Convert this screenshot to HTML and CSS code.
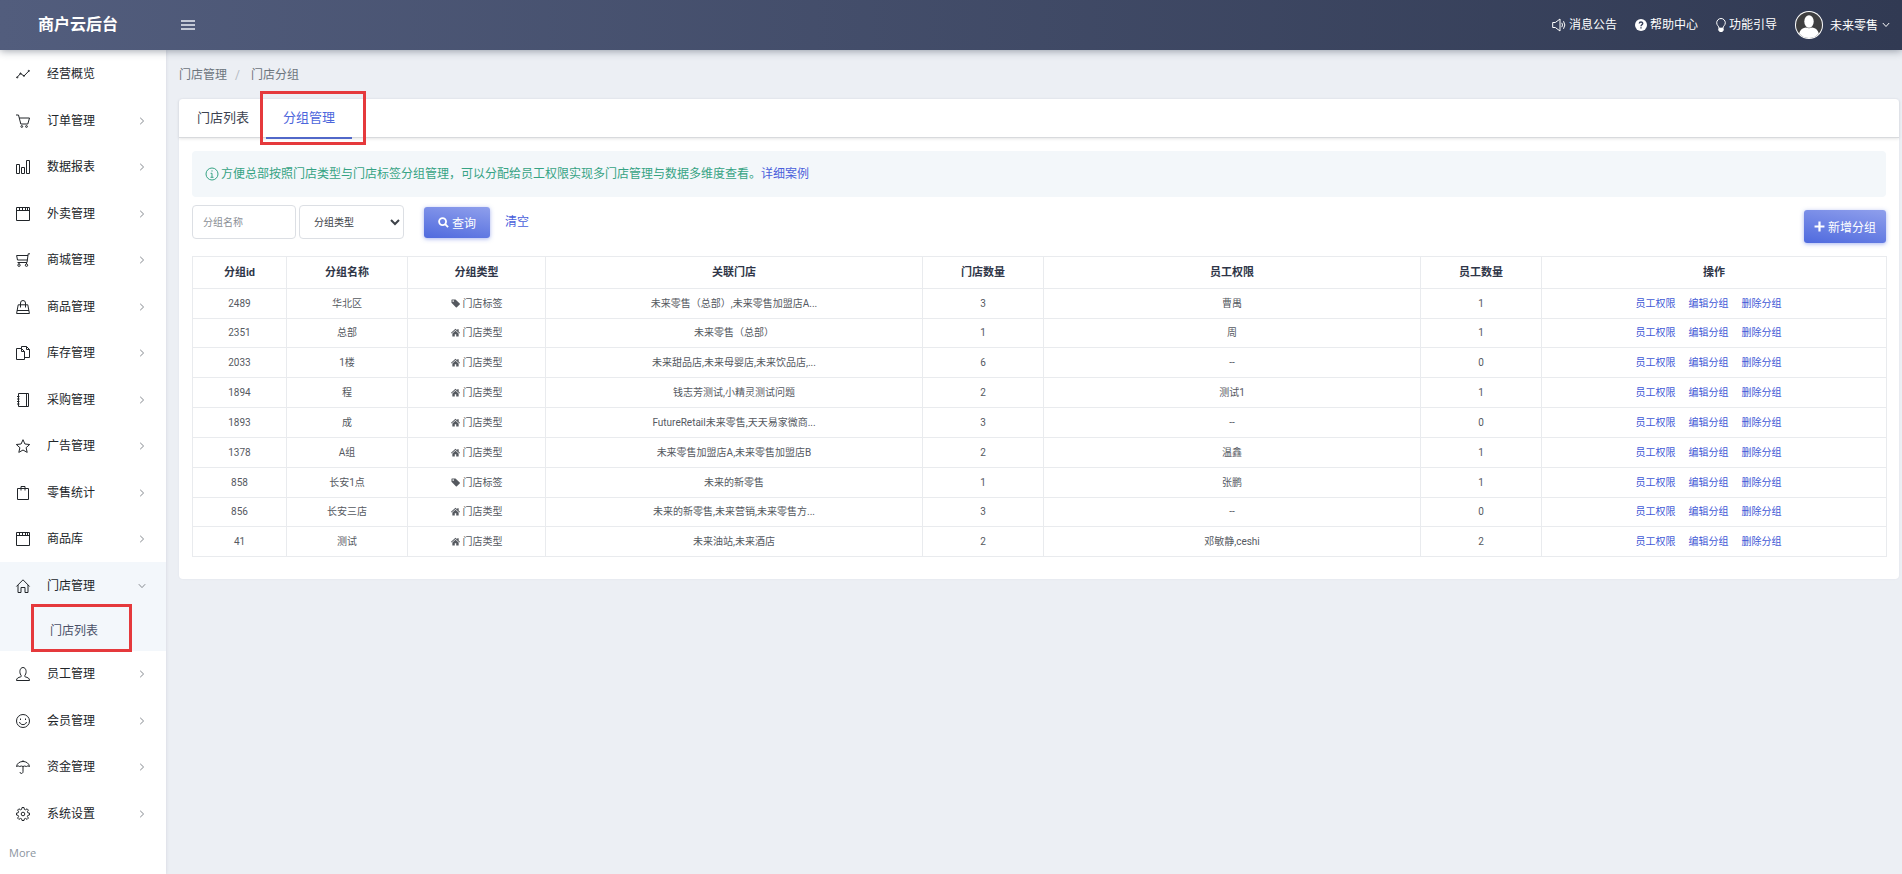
FILE: index.html
```html
<!DOCTYPE html>
<html lang="zh-CN">
<head>
<meta charset="utf-8">
<title>商户云后台</title>
<link rel="stylesheet" href="styles.css">
</head>
<body>
<svg class="sprite" aria-hidden="true">
  <symbol id="chev" viewBox="0 0 6 8"><path d="M1.2 .8 4.6 4 1.2 7.2"/></symbol>
  <symbol id="tag" viewBox="0 0 10 10"><path fill-rule="evenodd" d="M.5 1v3.200l4.900 5a.8.8 0 0 0 1.100 0L9.700 6a.8.8 0 0 0 0-1.100L5 .5H1A.5.5 0 0 0 .5 1zm2.800 1.300a.9.9 0 1 1-1.800 0 .9.9 0 0 1 1.800 0z"/></symbol>
  <symbol id="house" viewBox="0 0 10 10"><path d="M5 .8 0 5.300l.6.8L5 2.200l4.400 3.900.6-.8-1.500-1.300V1.300H6.900v1.200zM5 3.100 1.500 6.100v3.400h2.700V6.900h1.600v2.600h2.700V6.100z"/></symbol>
</svg>

<header class="topbar">
  <a class="brand" href="#">商户云后台</a>
  <button class="burger" type="button" aria-label="菜单"><svg viewBox="0 0 14 10"><path d="M0 1h14M0 5h14M0 9h14"/></svg></button>
  <nav class="top-links">
    <a href="#"><svg class="ic" viewBox="0 0 14 14"><path d="M.7 4.500h2.600L8 1v12L3.300 9.500H.7zM9.800 4.800q1.400 2.200 0 4.400M11.500 3.200q2.700 3.800 0 7.600"/></svg>消息公告</a>
    <a href="#"><svg class="ic12" viewBox="0 0 12 12"><circle cx="6" cy="6" r="6" fill="#fff"/><path d="M4.300 4.600C4.300 2.500 7.700 2.500 7.700 4.500 7.700 5.800 6 5.800 6 7.200M6 8.300v1.300" fill="none" stroke="#37415b" stroke-width="1.400"/></svg>帮助中心</a>
    <a href="#"><svg class="ic bulb" viewBox="0 0 10 14"><path d="M3 10.200C3 8 .7 7.500.7 4.800a4.300 4.300 0 0 1 8.600 0C9.300 7.500 7 8 7 10.200z"/><path d="M2.800 10.500h4.400v2L6 13.500H4l-1.200-1z" fill="#fff"/></svg>功能引导</a>
  </nav>
  <button class="account" type="button">
    <svg class="avatar" viewBox="0 0 28 28"><circle cx="14" cy="14" r="14" fill="#fff"/><circle cx="14" cy="14" r="13" fill="#3f3f40"/><path d="M4.200 22.600c.8-4.300 4-6 6.800-6.200q3 1.600 6 0c2.800.2 6 1.900 6.800 6.200A13 13 0 0 1 4.200 22.600z" fill="#fff"/><ellipse cx="14" cy="10.500" rx="4.700" ry="6.300" fill="#fff"/></svg>
    <span>未来零售</span>
    <svg class="down" viewBox="0 0 8 6"><path d="M.8 1 4 4.500 7.200 1"/></svg>
  </button>
</header>

<div class="shell">
  <aside class="sidebar">
    <ul class="menu">
      <li><a href="#"><svg class="ic" viewBox="0 0 14 14"><path d="M1 10.500 4.500 6.500 8 9 13 3.800"/><circle cx="1.200" cy="10.400" r=".6"/><circle cx="4.500" cy="6.500" r=".6"/><circle cx="8" cy="8.800" r=".6"/><circle cx="12.800" cy="3.900" r=".6"/></svg><span>经营概览</span></a></li>
      <li><a href="#"><svg class="ic" viewBox="0 0 14 14"><path d="M0 1h2.500l2.300 9h7L13.500 4H3.300"/><circle cx="5.800" cy="12.500" r=".9"/><circle cx="10.500" cy="12.500" r=".9"/></svg><span>订单管理</span><svg class="go"><use href="#chev"/></svg></a></li>
      <li><a href="#"><svg class="ic" viewBox="0 0 14 14"><path d="M.5 4.500h3v9h-3zM5.500 7.500h3v6h-3zM10.500 .5h3v13h-3z"/></svg><span>数据报表</span><svg class="go"><use href="#chev"/></svg></a></li>
      <li><a href="#"><svg class="ic" viewBox="0 0 14 14"><path d="M.5 .5h13v13H.5zM.5 3.500h13M3.500 .5v3M6.500 .5v3M9.500 .5v3M11.500 .5v3"/></svg><span>外卖管理</span><svg class="go"><use href="#chev"/></svg></a></li>
      <li><a href="#"><svg class="ic" viewBox="0 0 14 14"><path d="M14 .8h-1.800L11 9.500H1.500M12 2.500H.6l.9 4.500h9.900M3 9.500v1.500M10.500 9.500v1.500"/><circle cx="3" cy="12.200" r="1.200"/><circle cx="10.500" cy="12.200" r="1.200"/></svg><span>商城管理</span><svg class="go"><use href="#chev"/></svg></a></li>
      <li><a href="#"><svg class="ic" viewBox="0 0 14 14"><path d="M2.200 4.800h9.600l1.600 8.700H.6zM1 10.500h12M4.500 7.500V3a2.500 2.500 0 0 1 5 0v4.500"/></svg><span>商品管理</span><svg class="go"><use href="#chev"/></svg></a></li>
      <li><a href="#"><svg class="ic" viewBox="0 0 14 14"><path d="M.5 2.500h5L8.500 5.500v8H.5zM5.500 2.500v3h3M5.500 2.300V.5h5l3 3v8h-5M10.500.5v3h3"/></svg><span>库存管理</span><svg class="go"><use href="#chev"/></svg></a></li>
      <li><a href="#"><svg class="ic" viewBox="0 0 14 14"><path d="M2.500.5h10v13h-10zM10.500.5v13M1 3.500h2.500M1 6h2.500M1 8.500h2.500M1 11h2.500"/></svg><span>采购管理</span><svg class="go"><use href="#chev"/></svg></a></li>
      <li><a href="#"><svg class="ic" viewBox="0 0 14 14"><path d="m7 .7 1.900 4.300 4.800.5-3.600 3.200 1.100 4.700L7 11l-4.200 2.400 1.100-4.700L.3 5.500 5.100 5z"/></svg><span>广告管理</span><svg class="go"><use href="#chev"/></svg></a></li>
      <li><a href="#"><svg class="ic" viewBox="0 0 14 14"><path d="M1.500 2.500h11v11h-11zM5 4.500v-4h4v4"/></svg><span>零售统计</span><svg class="go"><use href="#chev"/></svg></a></li>
      <li><a href="#"><svg class="ic" viewBox="0 0 14 14"><path d="M.5 .5h13v13H.5zM.5 3.500h13M3.500 .5v3M6.500 .5v3M9.500 .5v3M11.500 .5v3"/></svg><span>商品库</span><svg class="go"><use href="#chev"/></svg></a></li>
      <li class="open"><a href="#"><svg class="ic" viewBox="0 0 14 14"><path d="M.4 7.500 7 .8l6.600 6.700M2 6v7.500h3v-5h4v5h3V6"/></svg><span>门店管理</span><svg class="go turned"><use href="#chev"/></svg></a>
        <div class="sub"><a href="#">门店列表</a><i class="mark mark-sub"></i></div>
      </li>
      <li><a href="#"><svg class="ic" viewBox="0 0 14 14"><path d="M.5 13.500c0-2.400 1.600-2.900 4.300-3.700.8-.3.600-1 .1-1.700C3 5.500 3.800.5 7 .5s4 5 2.100 7.600c-.5.700-.7 1.400.1 1.700 2.700.8 4.300 1.300 4.300 3.700z"/></svg><span>员工管理</span><svg class="go"><use href="#chev"/></svg></a></li>
      <li><a href="#"><svg class="ic" viewBox="0 0 14 14"><circle cx="7" cy="7" r="6.500"/><path d="M3.500 8c.7 3.500 6.300 3.500 7 0M4.500 4.500v1.500M9.500 4.500v1.500"/></svg><span>会员管理</span><svg class="go"><use href="#chev"/></svg></a></li>
      <li><a href="#"><svg class="ic" viewBox="0 0 14 14"><path d="M.5 6.500C1.500-.2 12.500-.2 13.500 6.500q-1.600-1.200-3.200 0-1.600-1-3.300 0-1.700-1-3.300 0-1.600-1.200-3.200 0zM7 6.500v5.200c0 2.300-3 2.300-3 .3M7 .3v1.200"/></svg><span>资金管理</span><svg class="go"><use href="#chev"/></svg></a></li>
      <li><a href="#"><svg class="ic" viewBox="0 0 14 14"><circle cx="7" cy="7" r="1.800"/><path d="m6 .5h2l.4 1.900 1.100.4 1.600-1 1.300 1.300-1 1.600.4 1.100 1.700.3v1.900l-1.700.4-.4 1.100 1 1.600-1.300 1.300-1.600-1-1.100.4-.4 1.700H6l-.4-1.700-1.100-.4-1.600 1-1.300-1.300 1-1.600-.4-1.100L.5 8V6.100l1.700-.3.4-1.100-1-1.600 1.300-1.300 1.600 1 1.100-.4z"/></svg><span>系统设置</span><svg class="go"><use href="#chev"/></svg></a></li>
    </ul>
    <a class="more" href="#">More</a>
  </aside>

  <main class="content">
    <nav class="crumbs"><a href="#">门店管理</a><span class="slash">/</span><a href="#">门店分组</a></nav>
    <section class="card">
      <nav class="tabs">
        <a href="#">门店列表</a>
        <a class="active" href="#">分组管理<i class="mark mark-tab"></i></a>
      </nav>
      <div class="card-body">
        <p class="notice"><svg viewBox="0 0 14 14"><circle cx="7" cy="7" r="6"/><path d="M7 3.300v1.300M5.600 6.300H7v4M5.500 10.300h3"/></svg><span>方便总部按照门店类型与门店标签分组管理，可以分配给员工权限实现多门店管理与数据多维度查看。<a href="#">详细案例</a></span></p>
        <form class="filters">
          <input type="text" placeholder="分组名称" aria-label="分组名称">
          <select aria-label="分组类型"><option>分组类型</option><option>门店标签</option><option>门店类型</option></select>
          <button class="btn search" type="button"><svg viewBox="0 0 12 12"><circle cx="5" cy="5" r="3.800"/><path d="m7.800 7.800 3.200 3.200"/></svg>查询</button>
          <a class="clear" href="#">清空</a>
          <button class="btn add" type="button"><svg viewBox="0 0 10 10"><path d="M5 .5v9M.5 5h9"/></svg>新增分组</button>
        </form>
        <table>
          <colgroup><col class="c-id"><col class="c-num"><col class="c-type"><col class="c-wide"><col class="c-num"><col class="c-wide"><col class="c-num"><col class="c-act"></colgroup>
          <thead><tr><th>分组id</th><th>分组名称</th><th>分组类型</th><th>关联门店</th><th>门店数量</th><th>员工权限</th><th>员工数量</th><th>操作</th></tr></thead>
          <tbody>
            <tr><td>2489</td><td>华北区</td><td><svg><use href="#tag"/></svg>门店标签</td><td>未来零售（总部）,未来零售加盟店A...</td><td>3</td><td>曹禺</td><td>1</td><td><a href="#">员工权限</a><a href="#">编辑分组</a><a href="#">删除分组</a></td></tr>
            <tr><td>2351</td><td>总部</td><td><svg><use href="#house"/></svg>门店类型</td><td>未来零售（总部）</td><td>1</td><td>周</td><td>1</td><td><a href="#">员工权限</a><a href="#">编辑分组</a><a href="#">删除分组</a></td></tr>
            <tr><td>2033</td><td>1楼</td><td><svg><use href="#house"/></svg>门店类型</td><td>未来甜品店,未来母婴店,未来饮品店,...</td><td>6</td><td>--</td><td>0</td><td><a href="#">员工权限</a><a href="#">编辑分组</a><a href="#">删除分组</a></td></tr>
            <tr><td>1894</td><td>程</td><td><svg><use href="#house"/></svg>门店类型</td><td>钱志芳测试,小精灵测试问题</td><td>2</td><td>测试1</td><td>1</td><td><a href="#">员工权限</a><a href="#">编辑分组</a><a href="#">删除分组</a></td></tr>
            <tr><td>1893</td><td>成</td><td><svg><use href="#house"/></svg>门店类型</td><td>FutureRetail未来零售,天天易家微商...</td><td>3</td><td>--</td><td>0</td><td><a href="#">员工权限</a><a href="#">编辑分组</a><a href="#">删除分组</a></td></tr>
            <tr><td>1378</td><td>A组</td><td><svg><use href="#house"/></svg>门店类型</td><td>未来零售加盟店A,未来零售加盟店B</td><td>2</td><td>温鑫</td><td>1</td><td><a href="#">员工权限</a><a href="#">编辑分组</a><a href="#">删除分组</a></td></tr>
            <tr><td>858</td><td>长安1点</td><td><svg><use href="#tag"/></svg>门店标签</td><td>未来的新零售</td><td>1</td><td>张鹏</td><td>1</td><td><a href="#">员工权限</a><a href="#">编辑分组</a><a href="#">删除分组</a></td></tr>
            <tr><td>856</td><td>长安三店</td><td><svg><use href="#house"/></svg>门店类型</td><td>未来的新零售,未来营销,未来零售方...</td><td>3</td><td>--</td><td>0</td><td><a href="#">员工权限</a><a href="#">编辑分组</a><a href="#">删除分组</a></td></tr>
            <tr><td>41</td><td>测试</td><td><svg><use href="#house"/></svg>门店类型</td><td>未来油站,未来酒店</td><td>2</td><td>邓敏静,ceshi</td><td>2</td><td><a href="#">员工权限</a><a href="#">编辑分组</a><a href="#">删除分组</a></td></tr>
          </tbody>
        </table>
      </div>
    </section>
  </main>
</div>
</body>
</html>
```

FILE: styles.css
```css
* { box-sizing: border-box; }

body {
  margin: 0;
  min-height: 100vh;
  display: flex;
  flex-direction: column;
  background: #eceff4;
  color: #212529;
  font: 12px/18px Roboto, "Noto Sans CJK SC", sans-serif;
}

a { color: inherit; text-decoration: none; }
button, input, select { font-family: inherit; }
.sprite { display: none; }

.ic {
  width: 14px;
  height: 14px;
  flex: none;
  fill: none;
  stroke: currentColor;
  overflow: visible;
}

/* top bar */
.topbar {
  position: relative;
  z-index: 2;
  display: flex;
  align-items: center;
  height: 50px;
  padding: 0 12px 1px 0;
  background: linear-gradient(90deg, #525d7d, #313a53);
  box-shadow: 0 1px 8px rgba(40, 50, 70, .45);
  color: #fff;
}
.brand {
  width: 181px;
  padding-left: 38px;
  font-size: 16px;
  line-height: 24px;
  font-weight: 700;
}
.burger, .account {
  padding: 0;
  border: 0;
  background: none;
  color: inherit;
  font-size: 12px;
}
.burger svg {
  display: block;
  width: 14px;
  height: 10px;
  stroke: #c3c9d6;
  stroke-width: 2;
}
.top-links {
  display: flex;
  gap: 18px;
  margin-left: auto;
}
.top-links a {
  display: flex;
  align-items: center;
  gap: 3px;
}
.ic12 { width: 12px; height: 12px; }
.bulb { width: 10px; }
.account {
  display: flex;
  align-items: center;
  gap: 7px;
  margin-left: 18px;
}
.avatar { width: 28px; height: 28px; }
.down {
  width: 8px;
  height: 6px;
  margin-left: -3px;
  fill: none;
  stroke: #fff;
}

/* side menu */
.shell { flex: 1; display: flex; }
.sidebar {
  flex: none;
  width: 166px;
  padding-top: 1px;
  background: #fff;
  box-shadow: 0 0 3px rgba(60, 70, 100, .15);
}
.menu { margin: 0; padding: 0; list-style: none; }
.menu li > a {
  display: flex;
  align-items: center;
  height: 46px;
  padding: 0 21px 0 16px;
}
.menu li:nth-child(even) > a { height: 47px; }
.menu li > a span { margin-left: 17px; }
.go {
  width: 6px;
  height: 8px;
  margin-left: auto;
  fill: none;
  stroke: #85898f;
}
.turned { transform: rotate(90deg); }
.open { background: #f3f7fb; }
.sub {
  position: relative;
  padding: 13px 0 11px 50px;
  color: #4a5068;
}
.more {
  display: block;
  padding: 7px 9px;
  color: #8b94a0;
  font-family: "Open Sans", sans-serif;
  font-size: 11px;
}

.mark {
  position: absolute;
  border: 3px solid #e5393c;
  pointer-events: none;
}
.mark-sub { left: 31px; top: -5px; width: 101px; height: 48px; }
.mark-tab { left: -6px; top: -8px; width: 106px; height: 54px; }

/* content */
.content { flex: 1; min-width: 0; padding: 16px 3px 0 13px; }
.crumbs { display: flex; color: #6c757d; }
.slash { padding: 0 11px 0 8px; color: #b4bac3; }
.card {
  margin-top: 15px;
  border-radius: 4px;
  background: #fff;
  box-shadow: 0 0 2px rgba(60, 70, 100, .08);
}
.tabs {
  display: flex;
  height: 39px;
  border-bottom: 1px solid #d8dadd;
  box-shadow: 0 1px 3px rgba(0, 0, 0, .1);
  font-size: 13px;
}
.tabs a {
  position: relative;
  padding: 10px 17px 0 18px;
  color: #3c4250;
}
.tabs .active {
  height: 40px;
  padding-left: 17px;
  border-bottom: 2px solid #5168c9;
  color: #4c66dc;
}
.card-body { padding: 13px 13px 22px; }
.notice {
  display: flex;
  align-items: center;
  gap: 2px;
  margin: 0;
  padding: 14px 13px;
  border-radius: 4px;
  background: #f3f7fa;
  color: #36a384;
}
.notice svg { width: 14px; height: 14px; fill: none; stroke: currentColor; }
.notice a, .clear { color: #4a5fdb; }

.filters {
  display: flex;
  align-items: center;
  margin: 8px 0 17px;
}
.filters input, .filters select {
  height: 34px;
  border: 1px solid #dcdfe4;
  border-radius: 4px;
  background: #fff;
  color: #3d4248;
  font-size: 10px;
}
.filters input { width: 104px; padding: 0 10px; }
.filters input::placeholder { color: #8b8f96; }
.filters select { width: 105px; margin-left: 3px; padding: 0 0 0 10px; }
.btn {
  display: flex;
  align-items: center;
  justify-content: center;
  gap: 3px;
  border: 0;
  border-radius: 3px;
  background: linear-gradient(10deg, #4f6ade, #8f9fec);
  box-shadow: 0 1px 4px rgba(80, 105, 225, .5);
  color: #fff;
  font-size: 12px;
}
.btn svg { width: 11px; height: 11px; fill: none; stroke: #fff; stroke-width: 2; }
.search { width: 66px; height: 31px; margin-left: 20px; }
.clear { margin-left: 15px; }
.add { width: 82px; height: 33px; margin: 5px 0 -4px auto; }

table {
  width: 100%;
  border-collapse: collapse;
  table-layout: fixed;
  text-align: center;
  font-size: 10px;
  line-height: 16px;
  color: #55595f;
}
.c-id { width: 94px; }
.c-num { width: 121px; }
.c-type { width: 138px; }
.c-wide { width: 377px; }
.c-act { width: 345px; }
th, td { padding: 0; border: 1px solid #e9ebee; }
th { height: 32px; padding-top: 1px; color: #2f3648; font-size: 11px; font-weight: 700; }
td { height: 30px; }
tr:nth-child(6n + 2) td { height: 29px; }
td svg { width: 9px; height: 9px; margin-right: 3px; fill: currentColor; vertical-align: -1px; }
td a { margin-right: 13px; color: #4159d6; }
td a:last-child { margin-right: 11px; }
```
